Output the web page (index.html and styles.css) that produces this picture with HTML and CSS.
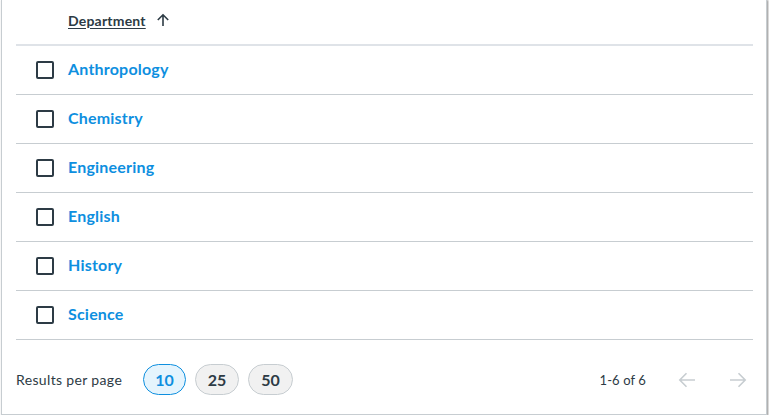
FILE: index.html
```html
<!DOCTYPE html>
<html>
<head>
<meta charset="utf-8">
<link rel="stylesheet" href="styles.css">
</head>
<body>
<div class="card">
  <div class="head-row">
    <span class="cell-check"></span>
    <span class="head-label">Department</span>
    <svg class="sort-icon" width="14" height="14" viewBox="0 0 14 14"><path d="M7 13V1.8M1.8 7L7 1.8 12.2 7" fill="none" stroke="#2d3b45" stroke-width="1.6"/></svg>
  </div>
  <div class="row"><span class="cell-check"><span class="box"></span></span><a class="link">Anthropology</a></div>
  <div class="row"><span class="cell-check"><span class="box"></span></span><a class="link">Chemistry</a></div>
  <div class="row"><span class="cell-check"><span class="box"></span></span><a class="link">Engineering</a></div>
  <div class="row"><span class="cell-check"><span class="box"></span></span><a class="link">English</a></div>
  <div class="row"><span class="cell-check"><span class="box"></span></span><a class="link">History</a></div>
  <div class="row"><span class="cell-check"><span class="box"></span></span><a class="link">Science</a></div>
  <div class="footer">
    <span class="rpp">Results per page</span>
    <div class="pills">
      <span class="pill active">10</span>
      <span class="pill">25</span>
      <span class="pill">50</span>
    </div>
    <span class="spacer"></span>
    <span class="count">1-6 of 6</span>
    <svg class="nav prev" width="18" height="16" viewBox="0 0 18 16"><path d="M17 8H1.8M8.5 1.3L1.8 8l6.7 6.7" fill="none" stroke="#c7cdd1" stroke-width="1.6"/></svg>
    <svg class="nav next" width="18" height="16" viewBox="0 0 18 16"><path d="M1 8h15.2M9.5 1.3L16.2 8l-6.7 6.7" fill="none" stroke="#c7cdd1" stroke-width="1.6"/></svg>
  </div>
</div>
</body>
</html>
```
FILE: styles.css
```css
html, body { margin: 0; padding: 0; background: #fff; }
body { font-family: Lato, "Open Sans", sans-serif; color: #2d3b45; }
.card {
  box-sizing: border-box;
  width: 766px;
  height: 416px;
  margin: -1px 0 0 1px;
  border: 1px solid #c7cdd1;
  box-shadow: 1px 1px 2px rgba(0,0,0,0.45);
  background: #fff;
  padding: 0 13px 0 14px;
}
.head-row {
  display: flex;
  align-items: center;
  height: 44px;
  border-bottom: 2px solid #dfe3e8;
}
.cell-check { width: 52px; display: flex; align-items: center; padding-left: 20px; box-sizing: border-box; }
.head-label {
  font-size: 14px;
  font-weight: 700;
  letter-spacing: 0.2px;
  text-decoration: underline;
  text-underline-offset: 2px;
  color: #2d3b45;
  margin-bottom: 4px;
}
.sort-icon { margin-left: 10px; margin-bottom: 4px; }
.row {
  display: flex;
  align-items: center;
  height: 48px;
  border-bottom: 1px solid #c7cdd1;
}
.box {
  width: 14px; height: 14px;
  border: 2px solid #2d3b45;
  border-radius: 2px;
}
.link { color: #0e8fdf; font-size: 16px; font-weight: 700; letter-spacing: 0.2px; text-decoration: none; margin-bottom: 3px; }
.footer {
  display: flex;
  align-items: center;
  height: 74px;
  padding-top: 5px;
  box-sizing: border-box;
}
.rpp { font-size: 14px; letter-spacing: 0.35px; color: #2d3b45; }
.pills { display: flex; gap: 9px; margin-left: 21px; }
.pill {
  box-sizing: border-box;
  height: 31px;
  padding: 0 12px;
  border-radius: 16px;
  border: 1px solid #c7cdd1;
  background: #f1f1f1;
  display: flex; align-items: center; justify-content: center;
  font-size: 16px; font-weight: 700; color: #2d3b45;
}
.pill.active { background: #e5f4fd; border-color: #0e8fdf; color: #0e8fdf; padding: 0 11px; }
.spacer { flex: 1; }
.count { font-size: 13px; letter-spacing: 0.1px; color: #2d3b45; }
.nav.prev { margin-left: 32px; }
.nav.next { margin-left: 33px; margin-right: 6px; }
```
